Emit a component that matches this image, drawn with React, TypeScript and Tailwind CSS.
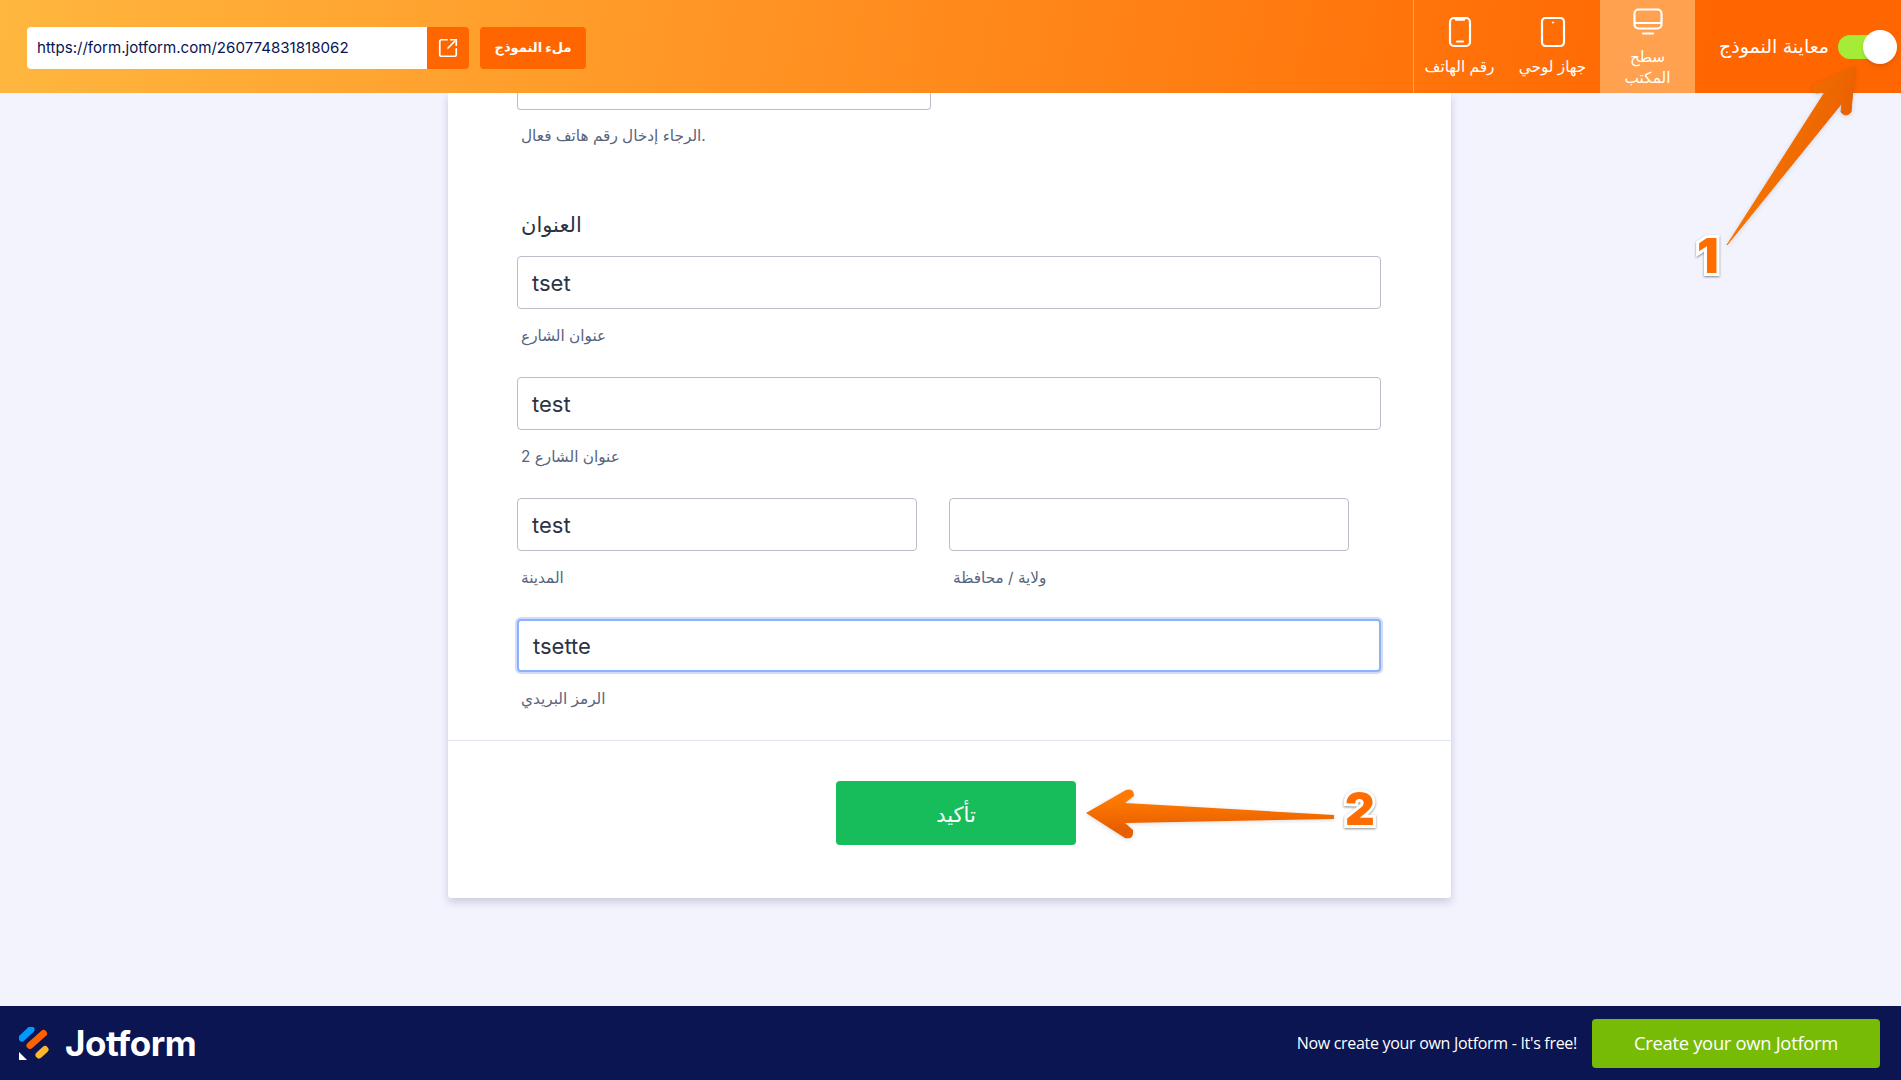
import { SquareArrowOutUpRight } from 'lucide-react'

const ui = "font-['Inter','DejaVu_Sans',sans-serif]"

function PhoneIcon() {
  return (
    <svg width="24" height="32" viewBox="0 0 24 32" fill="none" stroke="currentColor" strokeWidth="2.2" strokeLinecap="round">
      <rect x="2" y="2" width="20" height="28" rx="4" />
      <path d="M8 3.5h8" strokeWidth="2.6" />
      <path d="M9 25.500h6" />
    </svg>
  )
}

function TabletIcon() {
  return (
    <svg width="26" height="32" viewBox="0 0 26 32" fill="none" stroke="currentColor" strokeWidth="2.2" strokeLinecap="round">
      <rect x="2" y="2" width="22" height="28" rx="3.5" />
      <circle cx="13" cy="6.500" r="0.7" fill="currentColor" strokeWidth="0.8" />
    </svg>
  )
}

function DesktopIcon() {
  return (
    <svg width="30" height="27" viewBox="0 0 30 27" fill="none" stroke="currentColor" strokeWidth="2.2" strokeLinecap="round">
      <rect x="1.500" y="1.500" width="27" height="19" rx="4" />
      <path d="M2 15h26" />
      <path d="M10 25.500h10" />
    </svg>
  )
}

function DeviceTab({ label, active, className = '', children }: { label: string; active?: boolean; className?: string; children: React.ReactNode }) {
  return (
    <div className={`flex h-full flex-col items-center justify-center text-center text-[15.3px] leading-[21px] text-white ${active ? 'bg-[#ffa14f] pt-[3px]' : ''} ${className}`}>
      <div className={active ? 'mb-[11px]' : 'mb-[8px]'}>{children}</div>
      <span className={active ? 'w-[66px]' : ''}>{label}</span>
    </div>
  )
}

function Header() {
  return (
    <header className="flex h-[93px] shrink-0 items-center justify-between bg-[linear-gradient(100deg,#ffb73f,#ff6600_90%)] pl-[27px]">
      <div className="mt-[3px] flex items-center">
        <div className="flex h-[42px] w-[400px] items-center rounded-l-[4px] bg-white pl-[10px] text-[15.1px] text-[#0a1551]">
          https://form.jotform.com/260774831818062
        </div>
        <div className="flex h-[42px] w-[42px] items-center justify-center rounded-r-[4px] bg-[#ff6600] text-white">
          <SquareArrowOutUpRight size={22} strokeWidth={1.9} />
        </div>
        <div className="ml-[11px] flex h-[42px] w-[106px] items-center justify-center rounded-[4px] bg-[#ff6600] text-[13px] font-bold text-white">
          ملء النموذج
        </div>
      </div>
      <div className="flex h-full items-center">
        <div className="flex h-full border-l border-[#ffa45c]">
          <DeviceTab label="رقم الهاتف" className="w-[91px]"><PhoneIcon /></DeviceTab>
          <DeviceTab label="جهاز لوحي" className="w-[95px]"><TabletIcon /></DeviceTab>
          <DeviceTab label="سطح المكتب" active className="w-[95px]"><DesktopIcon /></DeviceTab>
        </div>
        <div className="flex w-[206px] items-center pl-[24px] text-[19px] text-white">
          <span className="whitespace-nowrap pt-[2px]">معاينة النموذج</span>
          <div className="relative ml-[9px] h-[24px] w-[59px] rounded-full bg-[#a4ec38]">
            <div className="absolute -top-[5px] right-0 h-[34px] w-[34px] rounded-full bg-white shadow-md" />
          </div>
        </div>
      </div>
    </header>
  )
}

function Hint({ children, className = '' }: { children: React.ReactNode; className?: string }) {
  return <p className={`h-5 pl-[4px] text-[15.3px] leading-5 text-[#57647e] ${className}`}>{children}</p>
}

function Field({ value, focused, className = '' }: { value?: string; focused?: boolean; className?: string }) {
  const edge = focused ? 'border-2 border-[#8fb0fb] shadow-[0_0_0_2px_#d0dcfd]' : 'border border-[#b8bdc9]'
  return (
    <div className={`flex h-[53px] items-center rounded-[4px] bg-white pt-[2px] pl-[14px] text-[22px] text-[#2c3345] ${edge} ${className}`}>
      {value}
    </div>
  )
}

function Form() {
  return (
    <div className="ml-[448px] h-[805px] w-[1003px] rounded-b-[3px] bg-white shadow-[0_4px_8px_rgba(10,21,81,0.18)]">
      <div className="pl-[69px]">
        <div className="h-[17px] w-[414px] rounded-b-[4px] border border-t-0 border-[#b8bdc9]" />
        <Hint className="mt-[16px]">الرجاء إدخال رقم هاتف فعال.</Hint>
        <h3 className="mt-[64px] mb-[16px] pl-[4px] text-[21px] leading-[30px] font-normal text-[#2c3345]">العنوان</h3>
        <Field value="tset" className="w-[864px]" />
        <Hint className="mt-[17px] mb-[31px]">عنوان الشارع</Hint>
        <Field value="test" className="w-[864px]" />
        <Hint className="mt-[17px] mb-[31px]">عنوان الشارع 2</Hint>
        <div className="flex gap-[32px]">
          <div className="w-[400px]">
            <Field value="test" />
            <Hint className="mt-[17px]">المدينة</Hint>
          </div>
          <div className="w-[400px]">
            <Field />
            <Hint className="mt-[17px]">ولاية / محافظة</Hint>
          </div>
        </div>
        <Field value="tsette" focused className="mt-[31px] w-[864px]" />
        <Hint className="mt-[17px]">الرمز البريدي</Hint>
      </div>
      <div className="mt-[31px] border-t border-[#e3e5f5] pt-[40px] pl-[388px]">
        <button className="flex h-[64px] w-[240px] items-center justify-center rounded-[4px] bg-[#18bd5b] pt-[3px] text-[21px] text-white">
          تأكيد
        </button>
      </div>
    </div>
  )
}

function Footer() {
  return (
    <footer className="flex h-[74px] shrink-0 items-center justify-between bg-[#0a1551] pr-[21px] pl-[19px]">
      <div className="flex items-center gap-[16px]">
        <svg width="30" height="33" viewBox="0 0 30 33">
          <path d="M0 25v8h8z" fill="#fff" />
          <path d="M3 11 12 2.500" stroke="#0099ff" strokeWidth="7" strokeLinecap="round" />
          <path d="M11 18.500 24.500 6.500" stroke="#ff6100" strokeWidth="7" strokeLinecap="round" />
          <path d="M20 28 26 22.500" stroke="#ffb629" strokeWidth="7" strokeLinecap="round" />
        </svg>
        <span className="text-[35px] leading-none font-bold tracking-[-0.5px] text-white">Jotform</span>
      </div>
      <div className="flex items-center gap-[15px] font-['Open_Sans',sans-serif]">
        <span className="text-[16px] tracking-[-0.3px] text-white">Now create your own Jotform - It's free!</span>
        <div className="flex h-[49px] w-[288px] items-center justify-center rounded-[4px] bg-[#78bb07] text-[18.4px] tracking-[-0.3px] text-white">
          Create your own Jotform
        </div>
      </div>
    </footer>
  )
}

function Annotations() {
  const digit =
    "absolute font-['Inter',sans-serif] font-black leading-none text-[#ff6d00] [-webkit-text-stroke:6px_white] [paint-order:stroke_fill] drop-shadow-[0_1px_1px_rgba(0,0,0,0.45)]"
  return (
    <>
      <svg className="pointer-events-none absolute inset-0" width="1901" height="1080" viewBox="0 0 1901 1080">
        <defs>
          <linearGradient id="arrowOne" x1="0" y1="0" x2="1" y2="0.4">
            <stop offset="0" stopColor="#ff8000" />
            <stop offset="1" stopColor="#e85f00" />
          </linearGradient>
          <linearGradient id="arrowTwo" x1="0" y1="0" x2="0" y2="1">
            <stop offset="0.2" stopColor="#ff7a00" />
            <stop offset="0.8" stopColor="#e85f00" />
          </linearGradient>
        </defs>
        <path
          d="M1855 66 L1815 85 Q1810 90 1816 93 L1825 92 L1727 245 L1842 103 L1841 112 Q1846 118 1851 112 Z"
          fill="url(#arrowOne)"
          stroke="url(#arrowOne)"
          strokeLinejoin="round"
          className="drop-shadow-sm"
        />
        <path
          d="M1086 813 L1126 790 Q1134 788 1134 796 L1125 803 L1334 815 L1334 819 L1125 823 L1133 830 Q1134 840 1125 838 Z"
          fill="url(#arrowTwo)"
          className="drop-shadow-sm"
        />
      </svg>
      <span className={`${digit} top-[232px] left-[1697px] text-[48px]`}>1</span>
      <span className={`${digit} top-[785px] left-[1345px] text-[46px]`}>2</span>
    </>
  )
}

export default function App() {
  return (
    <div className={`relative flex h-screen flex-col overflow-hidden bg-[#f3f3fe] ${ui}`}>
      <Header />
      <main className="flex-1 overflow-hidden pb-[8px]">
        <Form />
      </main>
      <Footer />
      <Annotations />
    </div>
  )
}
